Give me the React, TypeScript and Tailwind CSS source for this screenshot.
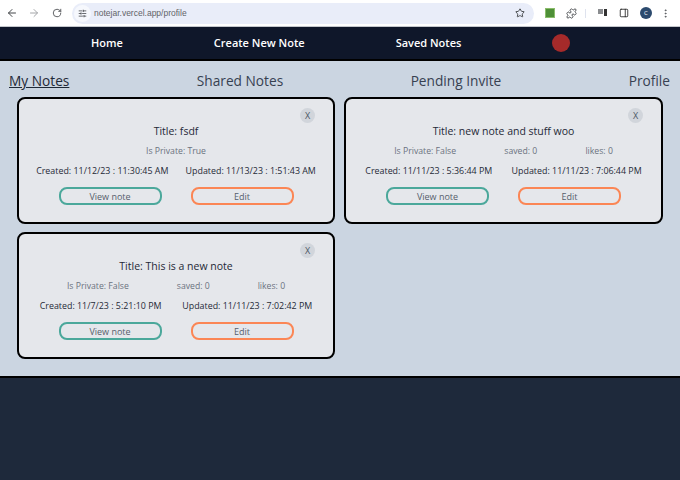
import React from "react";
import { ArrowLeft, ArrowRight, RotateCw, Star, Puzzle, SlidersHorizontal, PanelRight, EllipsisVertical } from "lucide-react";

type Note = {
  title: string;
  priv: string;
  counts: boolean;
  created: string;
  updated: string;
};

const notes: Note[] = [
  { title: "Title: fsdf", priv: "Is Private: True", counts: false, created: "Created: 11/12/23 : 11:30:45 AM", updated: "Updated: 11/13/23 : 1:51:43 AM" },
  { title: "Title: new note and stuff woo", priv: "Is Private: False", counts: true, created: "Created: 11/11/23 : 5:36:44 PM", updated: "Updated: 11/11/23 : 7:06:44 PM" },
  { title: "Title: This is a new note", priv: "Is Private: False", counts: true, created: "Created: 11/7/23 : 5:21:10 PM", updated: "Updated: 11/11/23 : 7:02:42 PM" },
];

function Card({ n }: { n: Note }) {
  return (
    <div className="h-[127px] border-2 border-black rounded-lg bg-[#e5e7eb] flex flex-col items-center relative">
      <div className="absolute top-[9px] right-[18px] w-[15px] h-[15px] rounded-full bg-[#d1d5db] flex items-center justify-center text-[9px] text-[#4b5563]">X</div>
      <div className="mt-[24px] text-[10.5px] leading-[16px] text-[#1f2937]">{n.title}</div>
      <div className="mt-[4px] w-full h-[16px] flex justify-evenly text-[8.7px] leading-[16px] text-[#6b7280]">
        <span>{n.priv}</span>
        {n.counts && <span>saved: 0</span>}
        {n.counts && <span>likes: 0</span>}
      </div>
      <div className="mt-[4px] w-full flex justify-evenly text-[8.9px] leading-[16px] font-medium text-[#1f2937]">
        <span>{n.created}</span>
        <span>{n.updated}</span>
      </div>
      <div className="mt-[8px] w-full flex justify-center gap-[29px]">
        <div className="w-[103px] h-[18px] rounded-lg border-2 border-[#4ba89b] text-[9px] leading-[15px] text-center text-[#565e6b]">View note</div>
        <div className="w-[103px] h-[18px] rounded-lg border-2 border-[#fb8655] text-[9px] leading-[15px] text-center text-[#565e6b]">Edit</div>
      </div>
    </div>
  );
}

export default function App() {
  return (
    <div className="w-[680px] h-[480px] overflow-hidden flex flex-col bg-[#1e293b] font-['Open_Sans','Noto_Sans',sans-serif]">
      <div className="h-[27px] shrink-0 bg-white border-b border-[#c4c7cc] flex items-center pl-[6px] pr-[6px]">
        <ArrowLeft size={12} className="text-[#44474a]" />
        <ArrowRight size={12} className="ml-[10px] text-[#a4a6a9]" />
        <RotateCw size={10} className="ml-[12px] text-[#44474a]" />
        <div className="ml-[10px] w-[462px] h-[21px] rounded-full bg-[#e9edf9] flex items-center">
          <div className="ml-[2px] w-[17px] h-[17px] rounded-full bg-[#f6f8fd] flex items-center justify-center">
            <SlidersHorizontal size={9} className="text-[#3c3f43]" />
          </div>
          <span className="ml-[3px] text-[8.5px] text-[#5f6368] font-['Liberation_Sans',sans-serif]">notejar.vercel.app/profile</span>
          <Star size={10} className="ml-auto mr-[9px] text-[#2f3134]" />
        </div>
        <div className="ml-[11px] w-[10px] h-[10px] bg-[#4e8f37] border border-[#8bbd6c]" />
        <Puzzle size={11} className="ml-[11px] text-[#44474a]" />
        <div className="ml-[8px] w-px h-[9px] bg-[#dfe3ee]" />
        <div className="ml-[12px] w-[9px] h-[8px] flex items-start gap-px">
          <div className="w-[5px] h-[5px] bg-[#8a8c8f]" />
          <div className="w-[3px] h-[7px] bg-[#333]" />
        </div>
        <PanelRight size={10} className="ml-[12px] text-[#222]" />
        <div className="ml-[11px] w-[12px] h-[12px] rounded-full bg-[#2c4a6e] flex items-center justify-center text-[6px] text-white">C</div>
        <EllipsisVertical size={11} className="ml-[8px] text-[#55585c]" />
      </div>
      <div className="h-[34px] shrink-0 bg-[#0f172a] border-b-2 border-black relative text-[11px] font-semibold text-white">
        <div className="h-full flex items-center pl-[91px]">
          <span>Home</span>
          <span className="ml-[91px]">Create New Note</span>
          <span className="ml-[91px]">Saved Notes</span>
          <div className="ml-[91px] w-[18px] h-[18px] rounded-full bg-[#a52a2a]" />
        </div>
      </div>
      <div className="h-[317px] shrink-0 bg-[#cbd5e1] border-b-2 border-black">
        <div className="mt-[9px] h-[22px] flex justify-between pl-[9px] pr-[10px] text-[13.7px] leading-[22px] text-[#374151]">
          <span className="underline text-[#1f2937]">My Notes</span>
          <span>Shared Notes</span>
          <span>Pending Invite</span>
          <span>Profile</span>
        </div>
        <div className="mt-[5px] pl-[17px] grid grid-cols-[318px_319px] gap-x-[9px] gap-y-[8px]">
          {notes.map((n) => (
            <Card key={n.title} n={n} />
          ))}
        </div>
      </div>
    </div>
  );
}
